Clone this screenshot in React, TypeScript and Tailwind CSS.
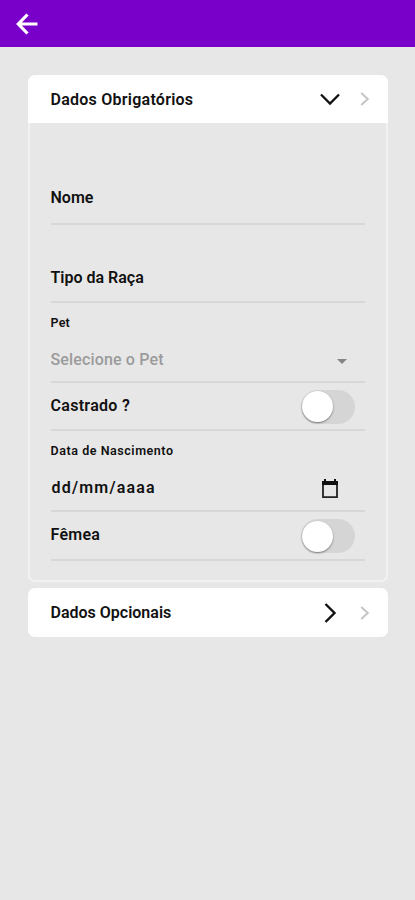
import { useState, type ReactNode } from "react";
import clsx from "clsx";

const chevronDown = "M2 3.5 11 12.5 20 3.5";
const chevronRight = "M2.5 2 11.5 11 2.5 20";

function PanelHeader({ title, open, onClick }: { title: ReactNode; open: boolean; onClick: () => void }) {
    return (
        <button
            onClick={onClick}
            className={clsx(
                "flex w-full items-center bg-white pl-[22.5px] pr-[17px] text-left",
                open ? "h-12 rounded-t-[7px]" : "h-[49px] rounded-[7px]"
            )}
        >
            <span className="flex-1 pt-px text-[16px] font-semibold">{title}</span>
            {open ? (
                <svg width="22" height="16" viewBox="0 0 22 16" fill="none" stroke="#111" strokeWidth="2.3" className="mr-[18px]">
                    <path d={chevronDown} />
                </svg>
            ) : (
                <svg width="14" height="22" viewBox="0 0 14 22" fill="none" stroke="#111" strokeWidth="2.4" className="mr-[22px]">
                    <path d={chevronRight} />
                </svg>
            )}
            <svg width="12" height="16" viewBox="0 0 12 16" fill="none" stroke="#c4c4c4" strokeWidth="1.9">
                <path d="M2.2 2 8.8 8 2.2 14" />
            </svg>
        </button>
    );
}

function Row({ className, children }: { className: string; children?: ReactNode }) {
    return <div className={clsx("flex border-b-2 border-[#d7d7d7]", className)}>{children}</div>;
}

function Toggle() {
    const [on, setOn] = useState(false);

    return (
        <button
            role="switch"
            aria-checked={on}
            onClick={() => setOn(!on)}
            className={clsx(
                "mr-[10px] mt-px flex h-[34px] w-[54px] items-center rounded-full p-px",
                on ? "justify-end bg-[#7900c8]" : "bg-[#d5d5d5]"
            )}
        >
            <span className="size-[31px] rounded-full bg-white shadow-[0_1px_2px_rgba(0,0,0,0.45)]" />
        </button>
    );
}

export default function App() {
    const [required, setRequired] = useState(true);
    const [optional, setOptional] = useState(false);

    return (
        <div className="min-h-screen bg-[#e7e7e7] font-['Roboto',sans-serif] text-[#111]">
            <header className="flex h-[47px] items-center bg-[#7900c8] pl-4">
                <button aria-label="Voltar">
                    <svg width="22" height="22" viewBox="0 0 22 22" fill="none" stroke="#fff" strokeWidth="3.2">
                        <path d="M21.5 11H3M11.5 1.5 2.3 11l9.2 9.5" />
                    </svg>
                </button>
            </header>

            <main className="flex flex-col gap-[6px] pl-7 pr-[27px] pt-7">
                <section>
                    <PanelHeader
                        title={<span className="tracking-[0.25px]">Dados Obrigatórios</span>}
                        open={required}
                        onClick={() => setRequired(!required)}
                    />
                    {required && (
                        <div className="rounded-b-[7px] border-x-2 border-b-2 border-[#f1f1f1] pb-[19px] pl-[20.5px] pr-[21px] text-[16px] font-semibold leading-5">
                            <Row className="h-[102px] pt-[65px]">Nome</Row>
                            <Row className="h-[78px] pt-[43px]">Tipo da Raça</Row>
                            <Row className="h-20 flex-col pt-3">
                                <span className="text-[12.5px] leading-4 tracking-[0.2px]">Pet</span>
                                <div className="flex items-center pt-[19px] font-medium text-[#9b9b9b]">
                                    <span className="flex-1 tracking-[0.15px]">Selecione o Pet</span>
                                    <svg width="10" height="5" viewBox="0 0 10 5" fill="#858585" className="mr-[18px] mt-[2px]">
                                        <path d="M0 0h10L5 5z" />
                                    </svg>
                                </div>
                            </Row>
                            <Row className="h-12 items-center justify-between">
                                <span className="-mt-px tracking-[0.3px]">Castrado ?</span>
                                <Toggle />
                            </Row>
                            <Row className="h-[81px] flex-col pt-3">
                                <span className="text-[12.5px] leading-4 tracking-[0.55px]">Data de Nascimento</span>
                                <div className="flex h-[39px] items-center pl-px pt-[18px]">
                                    <span className="flex-1 tracking-[1.2px]">dd/mm/aaaa</span>
                                    <svg width="18" height="20" viewBox="0 0 18 20" className="mr-[26px] mt-[3px]">
                                        <path d="M2 3h14v15.2H2z" fill="none" stroke="#222" strokeWidth="1.8" />
                                        <path d="M1 2h16v4H1zM3 0h2v3H3zM13 0h2v3h-2z" fill="#111" />
                                    </svg>
                                </div>
                            </Row>
                            <Row className="h-[49px] items-center justify-between">
                                <span className="-mt-px tracking-[0.25px]">Fêmea</span>
                                <Toggle />
                            </Row>
                        </div>
                    )}
                </section>

                <section>
                    <PanelHeader title="Dados Opcionais" open={optional} onClick={() => setOptional(!optional)} />
                </section>
            </main>
        </div>
    );
}
